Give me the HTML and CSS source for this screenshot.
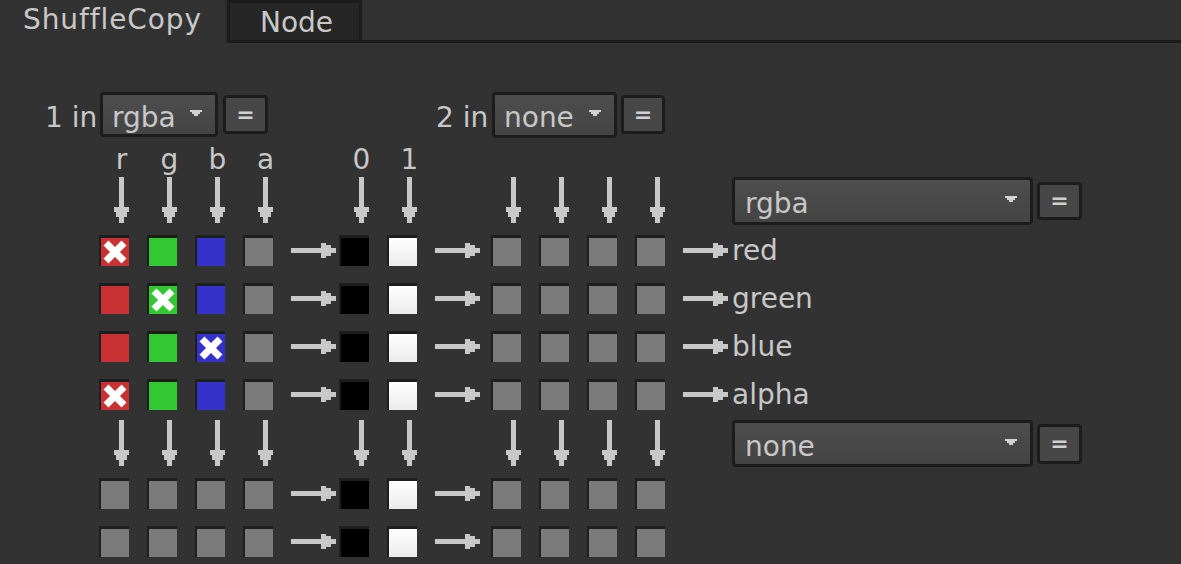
FILE: index.html
```html
<!DOCTYPE html>
<html>
<head>
<meta charset="utf-8">
<title>ShuffleCopy</title>
<link rel="stylesheet" href="styles.css">
</head>
<body>
<div class="panel">
  <div class="tabbar">
    <div class="tab tab--active">ShuffleCopy</div>
    <div class="tab tab--node">Node</div>
    <div class="tabbar-rest"></div>
  </div>

  <div class="inputs">
    <div class="input-group">
      <span class="in-label">1 in</span>
      <div class="dropdown dropdown--in1"><span class="dd-text">rgba</span><svg class="caret" viewBox="0 0 12 6"><path d="M0 0h12v2h-2v2h-2v2h-4v-2h-2v-2h-2z"/></svg></div>
      <div class="eq">=</div>
    </div>
    <div class="input-group input-group--2">
      <span class="in-label in-label--2">2 in</span>
      <div class="dropdown dropdown--in2"><span class="dd-text">none</span><svg class="caret" viewBox="0 0 12 6"><path d="M0 0h12v2h-2v2h-2v2h-4v-2h-2v-2h-2z"/></svg></div>
      <div class="eq eq--2">=</div>
    </div>
  </div>

  <div class="matrix">
    <!-- labels -->
    <div class="mrow mrow--labels">
      <span class="lbl">r</span><span class="lbl">g</span><span class="lbl">b</span><span class="lbl">a</span>
      <span></span>
      <span class="lbl">0</span><span class="lbl">1</span>
      <span></span>
      <span></span><span></span><span></span><span></span>
      <span></span><span></span>
    </div>

    <!-- down arrows + output layer -->
    <div class="mrow mrow--arrows">
      <svg class="down" viewBox="0 0 15 46"><path d="M5 0h5v30h5v5h-2v5h-3v6h-5v-6h-3v-5h-2v-5h5z"/></svg>
      <svg class="down" viewBox="0 0 15 46"><path d="M5 0h5v30h5v5h-2v5h-3v6h-5v-6h-3v-5h-2v-5h5z"/></svg>
      <svg class="down" viewBox="0 0 15 46"><path d="M5 0h5v30h5v5h-2v5h-3v6h-5v-6h-3v-5h-2v-5h5z"/></svg>
      <svg class="down" viewBox="0 0 15 46"><path d="M5 0h5v30h5v5h-2v5h-3v6h-5v-6h-3v-5h-2v-5h5z"/></svg>
      <span></span>
      <svg class="down" viewBox="0 0 15 46"><path d="M5 0h5v30h5v5h-2v5h-3v6h-5v-6h-3v-5h-2v-5h5z"/></svg>
      <svg class="down" viewBox="0 0 15 46"><path d="M5 0h5v30h5v5h-2v5h-3v6h-5v-6h-3v-5h-2v-5h5z"/></svg>
      <span></span>
      <svg class="down" viewBox="0 0 15 46"><path d="M5 0h5v30h5v5h-2v5h-3v6h-5v-6h-3v-5h-2v-5h5z"/></svg>
      <svg class="down" viewBox="0 0 15 46"><path d="M5 0h5v30h5v5h-2v5h-3v6h-5v-6h-3v-5h-2v-5h5z"/></svg>
      <svg class="down" viewBox="0 0 15 46"><path d="M5 0h5v30h5v5h-2v5h-3v6h-5v-6h-3v-5h-2v-5h5z"/></svg>
      <svg class="down" viewBox="0 0 15 46"><path d="M5 0h5v30h5v5h-2v5h-3v6h-5v-6h-3v-5h-2v-5h5z"/></svg>
      <span></span>
      <div class="out-ctl">
        <div class="dropdown dropdown--out"><span class="dd-text">rgba</span><svg class="caret" viewBox="0 0 12 6"><path d="M0 0h12v2h-2v2h-2v2h-4v-2h-2v-2h-2z"/></svg></div>
        <div class="eq eq--out">=</div>
      </div>
    </div>

    <!-- red -->
    <div class="mrow mrow--chan mrow--first">
      <div class="sw sw--r"><svg class="x" viewBox="0 0 28 28"><path d="M5 5L23 23M23 5L5 23"/></svg></div>
      <div class="sw sw--g"></div><div class="sw sw--b"></div><div class="sw sw--a"></div>
      <svg class="right" viewBox="0 0 45 15"><path d="M0 5h30v-5h5v2h5v3h5v5h-5v3h-5v2h-5v-5h-30z"/></svg>
      <div class="sw sw--k"></div><div class="sw sw--w"></div>
      <svg class="right" viewBox="0 0 45 15"><path d="M0 5h30v-5h5v2h5v3h5v5h-5v3h-5v2h-5v-5h-30z"/></svg>
      <div class="sw sw--a"></div><div class="sw sw--a"></div><div class="sw sw--a"></div><div class="sw sw--a"></div>
      <svg class="right" viewBox="0 0 45 15"><path d="M0 5h30v-5h5v2h5v3h5v5h-5v3h-5v2h-5v-5h-30z"/></svg>
      <span class="chan-name">red</span>
    </div>

    <!-- green -->
    <div class="mrow mrow--chan">
      <div class="sw sw--r"></div>
      <div class="sw sw--g"><svg class="x" viewBox="0 0 28 28"><path d="M5 5L23 23M23 5L5 23"/></svg></div>
      <div class="sw sw--b"></div><div class="sw sw--a"></div>
      <svg class="right" viewBox="0 0 45 15"><path d="M0 5h30v-5h5v2h5v3h5v5h-5v3h-5v2h-5v-5h-30z"/></svg>
      <div class="sw sw--k"></div><div class="sw sw--w"></div>
      <svg class="right" viewBox="0 0 45 15"><path d="M0 5h30v-5h5v2h5v3h5v5h-5v3h-5v2h-5v-5h-30z"/></svg>
      <div class="sw sw--a"></div><div class="sw sw--a"></div><div class="sw sw--a"></div><div class="sw sw--a"></div>
      <svg class="right" viewBox="0 0 45 15"><path d="M0 5h30v-5h5v2h5v3h5v5h-5v3h-5v2h-5v-5h-30z"/></svg>
      <span class="chan-name">green</span>
    </div>

    <!-- blue -->
    <div class="mrow mrow--chan">
      <div class="sw sw--r"></div><div class="sw sw--g"></div>
      <div class="sw sw--b"><svg class="x" viewBox="0 0 28 28"><path d="M5 5L23 23M23 5L5 23"/></svg></div>
      <div class="sw sw--a"></div>
      <svg class="right" viewBox="0 0 45 15"><path d="M0 5h30v-5h5v2h5v3h5v5h-5v3h-5v2h-5v-5h-30z"/></svg>
      <div class="sw sw--k"></div><div class="sw sw--w"></div>
      <svg class="right" viewBox="0 0 45 15"><path d="M0 5h30v-5h5v2h5v3h5v5h-5v3h-5v2h-5v-5h-30z"/></svg>
      <div class="sw sw--a"></div><div class="sw sw--a"></div><div class="sw sw--a"></div><div class="sw sw--a"></div>
      <svg class="right" viewBox="0 0 45 15"><path d="M0 5h30v-5h5v2h5v3h5v5h-5v3h-5v2h-5v-5h-30z"/></svg>
      <span class="chan-name">blue</span>
    </div>

    <!-- alpha -->
    <div class="mrow mrow--chan">
      <div class="sw sw--r"><svg class="x" viewBox="0 0 28 28"><path d="M5 5L23 23M23 5L5 23"/></svg></div>
      <div class="sw sw--g"></div><div class="sw sw--b"></div><div class="sw sw--a"></div>
      <svg class="right" viewBox="0 0 45 15"><path d="M0 5h30v-5h5v2h5v3h5v5h-5v3h-5v2h-5v-5h-30z"/></svg>
      <div class="sw sw--k"></div><div class="sw sw--w"></div>
      <svg class="right" viewBox="0 0 45 15"><path d="M0 5h30v-5h5v2h5v3h5v5h-5v3h-5v2h-5v-5h-30z"/></svg>
      <div class="sw sw--a"></div><div class="sw sw--a"></div><div class="sw sw--a"></div><div class="sw sw--a"></div>
      <svg class="right" viewBox="0 0 45 15"><path d="M0 5h30v-5h5v2h5v3h5v5h-5v3h-5v2h-5v-5h-30z"/></svg>
      <span class="chan-name">alpha</span>
    </div>

    <!-- down arrows + second output -->
    <div class="mrow mrow--arrows mrow--arrows2">
      <svg class="down" viewBox="0 0 15 46"><path d="M5 0h5v30h5v5h-2v5h-3v6h-5v-6h-3v-5h-2v-5h5z"/></svg>
      <svg class="down" viewBox="0 0 15 46"><path d="M5 0h5v30h5v5h-2v5h-3v6h-5v-6h-3v-5h-2v-5h5z"/></svg>
      <svg class="down" viewBox="0 0 15 46"><path d="M5 0h5v30h5v5h-2v5h-3v6h-5v-6h-3v-5h-2v-5h5z"/></svg>
      <svg class="down" viewBox="0 0 15 46"><path d="M5 0h5v30h5v5h-2v5h-3v6h-5v-6h-3v-5h-2v-5h5z"/></svg>
      <span></span>
      <svg class="down" viewBox="0 0 15 46"><path d="M5 0h5v30h5v5h-2v5h-3v6h-5v-6h-3v-5h-2v-5h5z"/></svg>
      <svg class="down" viewBox="0 0 15 46"><path d="M5 0h5v30h5v5h-2v5h-3v6h-5v-6h-3v-5h-2v-5h5z"/></svg>
      <span></span>
      <svg class="down" viewBox="0 0 15 46"><path d="M5 0h5v30h5v5h-2v5h-3v6h-5v-6h-3v-5h-2v-5h5z"/></svg>
      <svg class="down" viewBox="0 0 15 46"><path d="M5 0h5v30h5v5h-2v5h-3v6h-5v-6h-3v-5h-2v-5h5z"/></svg>
      <svg class="down" viewBox="0 0 15 46"><path d="M5 0h5v30h5v5h-2v5h-3v6h-5v-6h-3v-5h-2v-5h5z"/></svg>
      <svg class="down" viewBox="0 0 15 46"><path d="M5 0h5v30h5v5h-2v5h-3v6h-5v-6h-3v-5h-2v-5h5z"/></svg>
      <span></span>
      <div class="out-ctl">
        <div class="dropdown dropdown--out dropdown--none"><span class="dd-text">none</span><svg class="caret" viewBox="0 0 12 6"><path d="M0 0h12v2h-2v2h-2v2h-4v-2h-2v-2h-2z"/></svg></div>
        <div class="eq eq--out eq--none">=</div>
      </div>
    </div>

    <!-- second layer rows -->
    <div class="mrow mrow--chan mrow--after">
      <div class="sw sw--a"></div><div class="sw sw--a"></div><div class="sw sw--a"></div><div class="sw sw--a"></div>
      <svg class="right" viewBox="0 0 45 15"><path d="M0 5h30v-5h5v2h5v3h5v5h-5v3h-5v2h-5v-5h-30z"/></svg>
      <div class="sw sw--k"></div><div class="sw sw--w"></div>
      <svg class="right" viewBox="0 0 45 15"><path d="M0 5h30v-5h5v2h5v3h5v5h-5v3h-5v2h-5v-5h-30z"/></svg>
      <div class="sw sw--a"></div><div class="sw sw--a"></div><div class="sw sw--a"></div><div class="sw sw--a"></div>
    </div>
    <div class="mrow mrow--chan">
      <div class="sw sw--a"></div><div class="sw sw--a"></div><div class="sw sw--a"></div><div class="sw sw--a"></div>
      <svg class="right" viewBox="0 0 45 15"><path d="M0 5h30v-5h5v2h5v3h5v5h-5v3h-5v2h-5v-5h-30z"/></svg>
      <div class="sw sw--k"></div><div class="sw sw--w"></div>
      <svg class="right" viewBox="0 0 45 15"><path d="M0 5h30v-5h5v2h5v3h5v5h-5v3h-5v2h-5v-5h-30z"/></svg>
      <div class="sw sw--a"></div><div class="sw sw--a"></div><div class="sw sw--a"></div><div class="sw sw--a"></div>
    </div>
  </div>
</div>
</body>
</html>
```

FILE: styles.css
```css
html, body {
  margin: 0;
  padding: 0;
}

body {
  background: #323232;
  color: #c8c8c8;
  font-family: "DejaVu Sans", "Verdana", sans-serif;
  font-size: 28px;
  font-variant-ligatures: none;
  overflow: hidden;
}

/* ---------- tab bar ---------- */
.tabbar {
  display: flex;
  height: 43px;
}

.tab {
  box-sizing: border-box;
  line-height: 32px;
  white-space: nowrap;
}

.tab--active {
  width: 227px;
  padding: 4px 0 0 23px;
  letter-spacing: 0.9px;
}

.tab--node {
  width: 135px;
  border: 3px solid #1c1c1c;
  background: #262626;
  padding: 4px 0 0 30px;
  box-shadow: -2px 0 0 #2b2b2b;
}

.tabbar-rest {
  flex: 1;
  border-bottom: 3px solid #1c1c1c;
}

/* ---------- input selectors ---------- */
.inputs {
  display: flex;
  margin-top: 49px;
  padding-left: 45px;
  height: 45px;
}

.input-group {
  display: flex;
  align-items: center;
}

.input-group--2 {
  margin-left: 168px;
}

.in-label {
  width: 55px;
  padding-top: 6px;
  line-height: 33px;
  white-space: nowrap;
}

.in-label--2 {
  width: 56px;
}

.dropdown {
  display: flex;
  box-sizing: border-box;
  border: 3px solid #1c1c1c;
  border-radius: 4px;
  background: linear-gradient(#4d4d4d, #444444);
  line-height: 33px;
}

.dd-text {
  flex: 1;
  white-space: nowrap;
}

.caret {
  flex: none;
  width: 12px;
  height: 6px;
  margin-top: 9px;
  fill: #d2d2d2;
}

.dropdown--in1 {
  width: 118px;
  height: 45px;
  padding: 6px 13px 0 9px;
}

.dropdown--in2 {
  width: 125px;
  height: 46px;
  padding: 6px 13px 0 9px;
}

.eq {
  display: flex;
  align-items: center;
  justify-content: center;
  box-sizing: border-box;
  width: 45px;
  height: 39px;
  margin-left: 5px;
  border: 3px solid #1c1c1c;
  border-radius: 4px;
  background: #474747;
  font-size: 22px;
  font-weight: bold;
  line-height: 1;
  color: #d0d0d0;
}

.eq--2 {
  width: 44px;
  margin-left: 4px;
}

/* ---------- channel matrix ---------- */
.matrix {
  margin-top: 6px;
  padding-left: 99px;
}

.mrow {
  display: grid;
  grid-template-columns: repeat(4, 48px) 48px 48px 48px 56px repeat(4, 48px) 49px auto;
}

.mrow--labels {
  line-height: 34px;
  height: 34px;
}

.lbl {
  width: 45px;
  text-align: center;
}

.mrow--arrows {
  align-items: start;
}

.mrow--arrows2 {
  margin-top: 10px;
}

.down {
  display: block;
  width: 15px;
  height: 46px;
  margin-left: 15px;
  fill: #c8c8c8;
}

.right {
  display: block;
  width: 45px;
  height: 15px;
  fill: #c8c8c8;
}

.out-ctl {
  display: flex;
  align-items: center;
}

.dropdown--out {
  width: 301px;
  height: 48px;
  padding: 7px 13px 0 10px;
}

.dropdown--none {
  height: 47px;
}

.eq--out {
  width: 45px;
  height: 38px;
  margin-left: 4px;
}

.eq--none {
  height: 40px;
}

.mrow--chan {
  grid-template-rows: 31px;
  align-items: center;
  margin-top: 17px;
}

.mrow--first {
  margin-top: 10px;
}

.mrow--after {
  margin-top: 11px;
}

.chan-name {
  line-height: 33px;
  white-space: nowrap;
}

/* swatches */
.sw {
  box-sizing: border-box;
  width: 30px;
  height: 31px;
  border-left: 2px solid #1e1e1e;
  border-top: 3px solid #1e1e1e;
}

.sw--r { background: #c83232; }
.sw--g { background: #32c832; }
.sw--b { background: #3232c8; }
.sw--a { background: #7a7a7a; }
.sw--k { background: #000000; }
.sw--w { background: linear-gradient(#ffffff, #ececec); }

.x {
  display: block;
  width: 28px;
  height: 28px;
  stroke: #ffffff;
  stroke-width: 7;
  fill: none;
}
```
